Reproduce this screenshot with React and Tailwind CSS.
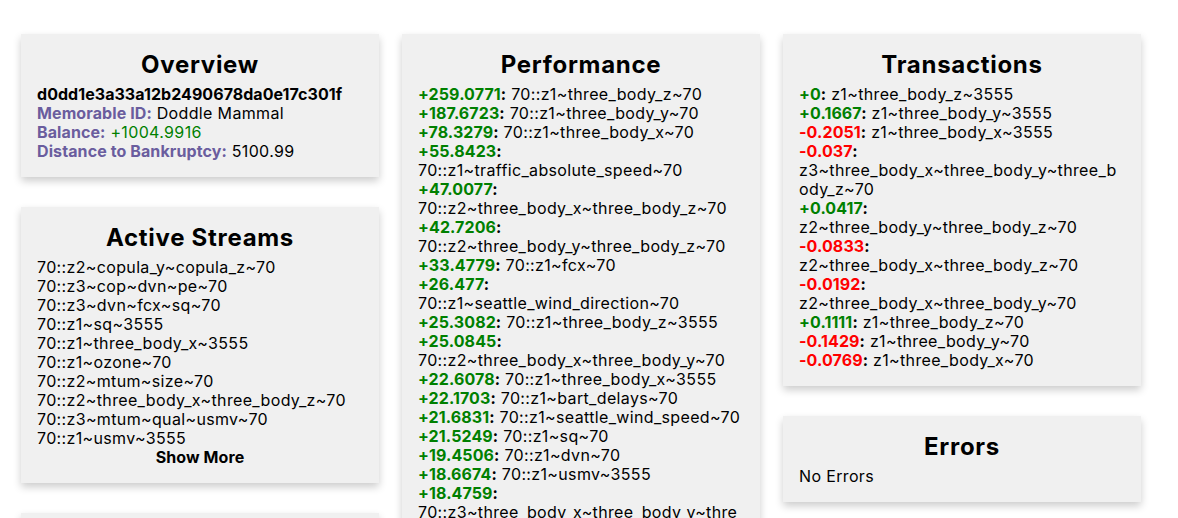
const STREAMS = [
  "70::z2~copula_y~copula_z~70",
  "70::z3~cop~dvn~pe~70",
  "70::z3~dvn~fcx~sq~70",
  "70::z1~sq~3555",
  "70::z1~three_body_x~3555",
  "70::z1~ozone~70",
  "70::z2~mtum~size~70",
  "70::z2~three_body_x~three_body_z~70",
  "70::z3~mtum~qual~usmv~70",
  "70::z1~usmv~3555",
];

const PERFORMANCE = [
  ["+259.0771", "70::z1~three_body_z~70"],
  ["+187.6723", "70::z1~three_body_y~70"],
  ["+78.3279", "70::z1~three_body_x~70"],
  ["+55.8423", "70::z1~traffic_absolute_speed~70"],
  ["+47.0077", "70::z2~three_body_x~three_body_z~70"],
  ["+42.7206", "70::z2~three_body_y~three_body_z~70"],
  ["+33.4779", "70::z1~fcx~70"],
  ["+26.477", "70::z1~seattle_wind_direction~70"],
  ["+25.3082", "70::z1~three_body_z~3555"],
  ["+25.0845", "70::z2~three_body_x~three_body_y~70"],
  ["+22.6078", "70::z1~three_body_x~3555"],
  ["+22.1703", "70::z1~bart_delays~70"],
  ["+21.6831", "70::z1~seattle_wind_speed~70"],
  ["+21.5249", "70::z1~sq~70"],
  ["+19.4506", "70::z1~dvn~70"],
  ["+18.6674", "70::z1~usmv~3555"],
  ["+18.4759", "70::z3~three_body_x~three_body_y~three_body_z~70"],
  ["+17.9312", "70::z1~copula_x~70"],
];

const TRANSACTIONS = [
  ["+0", "z1~three_body_z~3555"],
  ["+0.1667", "z1~three_body_y~3555"],
  ["-0.2051", "z1~three_body_x~3555"],
  ["-0.037", "z3~three_body_x~three_body_y~three_body_z~70"],
  ["+0.0417", "z2~three_body_y~three_body_z~70"],
  ["-0.0833", "z2~three_body_x~three_body_z~70"],
  ["-0.0192", "z2~three_body_x~three_body_y~70"],
  ["+0.1111", "z1~three_body_z~70"],
  ["-0.1429", "z1~three_body_y~70"],
  ["-0.0769", "z1~three_body_x~70"],
];

function Card({ title, children }) {
  return (
    <div className="bg-[#f0f0f0] shadow-[0_4px_8px_0_rgba(0,0,0,0.2)] px-4 py-4">
      <h2 className="text-center text-[24px] leading-[29px] font-bold tracking-[0.7px] mb-[6px]">{title}</h2>
      <div className="[overflow-wrap:anywhere]">{children}</div>
    </div>
  );
}

function Entry({ value, text }) {
  const color = value.startsWith("-") ? "text-[#ff0000]" : "text-[#008000]";
  return (
    <div>
      <span className="font-bold tracking-[0.1px]">
        <span className={color}>{value}</span>:
      </span>{" "}
      {text}
    </div>
  );
}

export default function App() {
  return (
    <div className="h-[518px] overflow-hidden bg-white text-black font-['Inter',sans-serif] text-[16px] leading-[19px] tracking-[0.35px]">
      <div className="flex items-start gap-[23px] pl-[21px] pt-[34px]">
        {/* left column */}
        <div className="w-[358px] flex flex-col gap-[30px]">
          <Card title="Overview">
            <div className="font-bold tracking-[0.05px]">d0dd1e3a33a12b2490678da0e17c301f</div>
            <div>
              <span className="font-bold tracking-[0.1px] text-[#6a5d9e]">Memorable ID:</span> Doddle Mammal
            </div>
            <div>
              <span className="font-bold tracking-[0.1px] text-[#6a5d9e]">Balance:</span>{" "}
              <span className="text-[#008000]">+1004.9916</span>
            </div>
            <div>
              <span className="font-bold tracking-[0.1px] text-[#6a5d9e]">Distance to Bankruptcy:</span> 5100.99
            </div>
          </Card>
          <Card title="Active Streams">
            {STREAMS.map((s) => (
              <div key={s}>{s}</div>
            ))}
            <div className="text-center font-bold tracking-[0.1px]">Show More</div>
          </Card>
          <Card title="Leaderboard">
            <div>Loading...</div>
          </Card>
        </div>

        {/* middle column */}
        <div className="w-[358px] flex flex-col gap-[30px]">
          <Card title="Performance">
            {PERFORMANCE.map(([v, t]) => (
              <Entry key={v + t} value={v} text={t} />
            ))}
          </Card>
        </div>

        {/* right column */}
        <div className="w-[358px] flex flex-col gap-[30px]">
          <Card title="Transactions">
            {TRANSACTIONS.map(([v, t]) => (
              <Entry key={v + t} value={v} text={t} />
            ))}
          </Card>
          <Card title="Errors">
            <div>No Errors</div>
          </Card>
        </div>
      </div>
    </div>
  );
}
